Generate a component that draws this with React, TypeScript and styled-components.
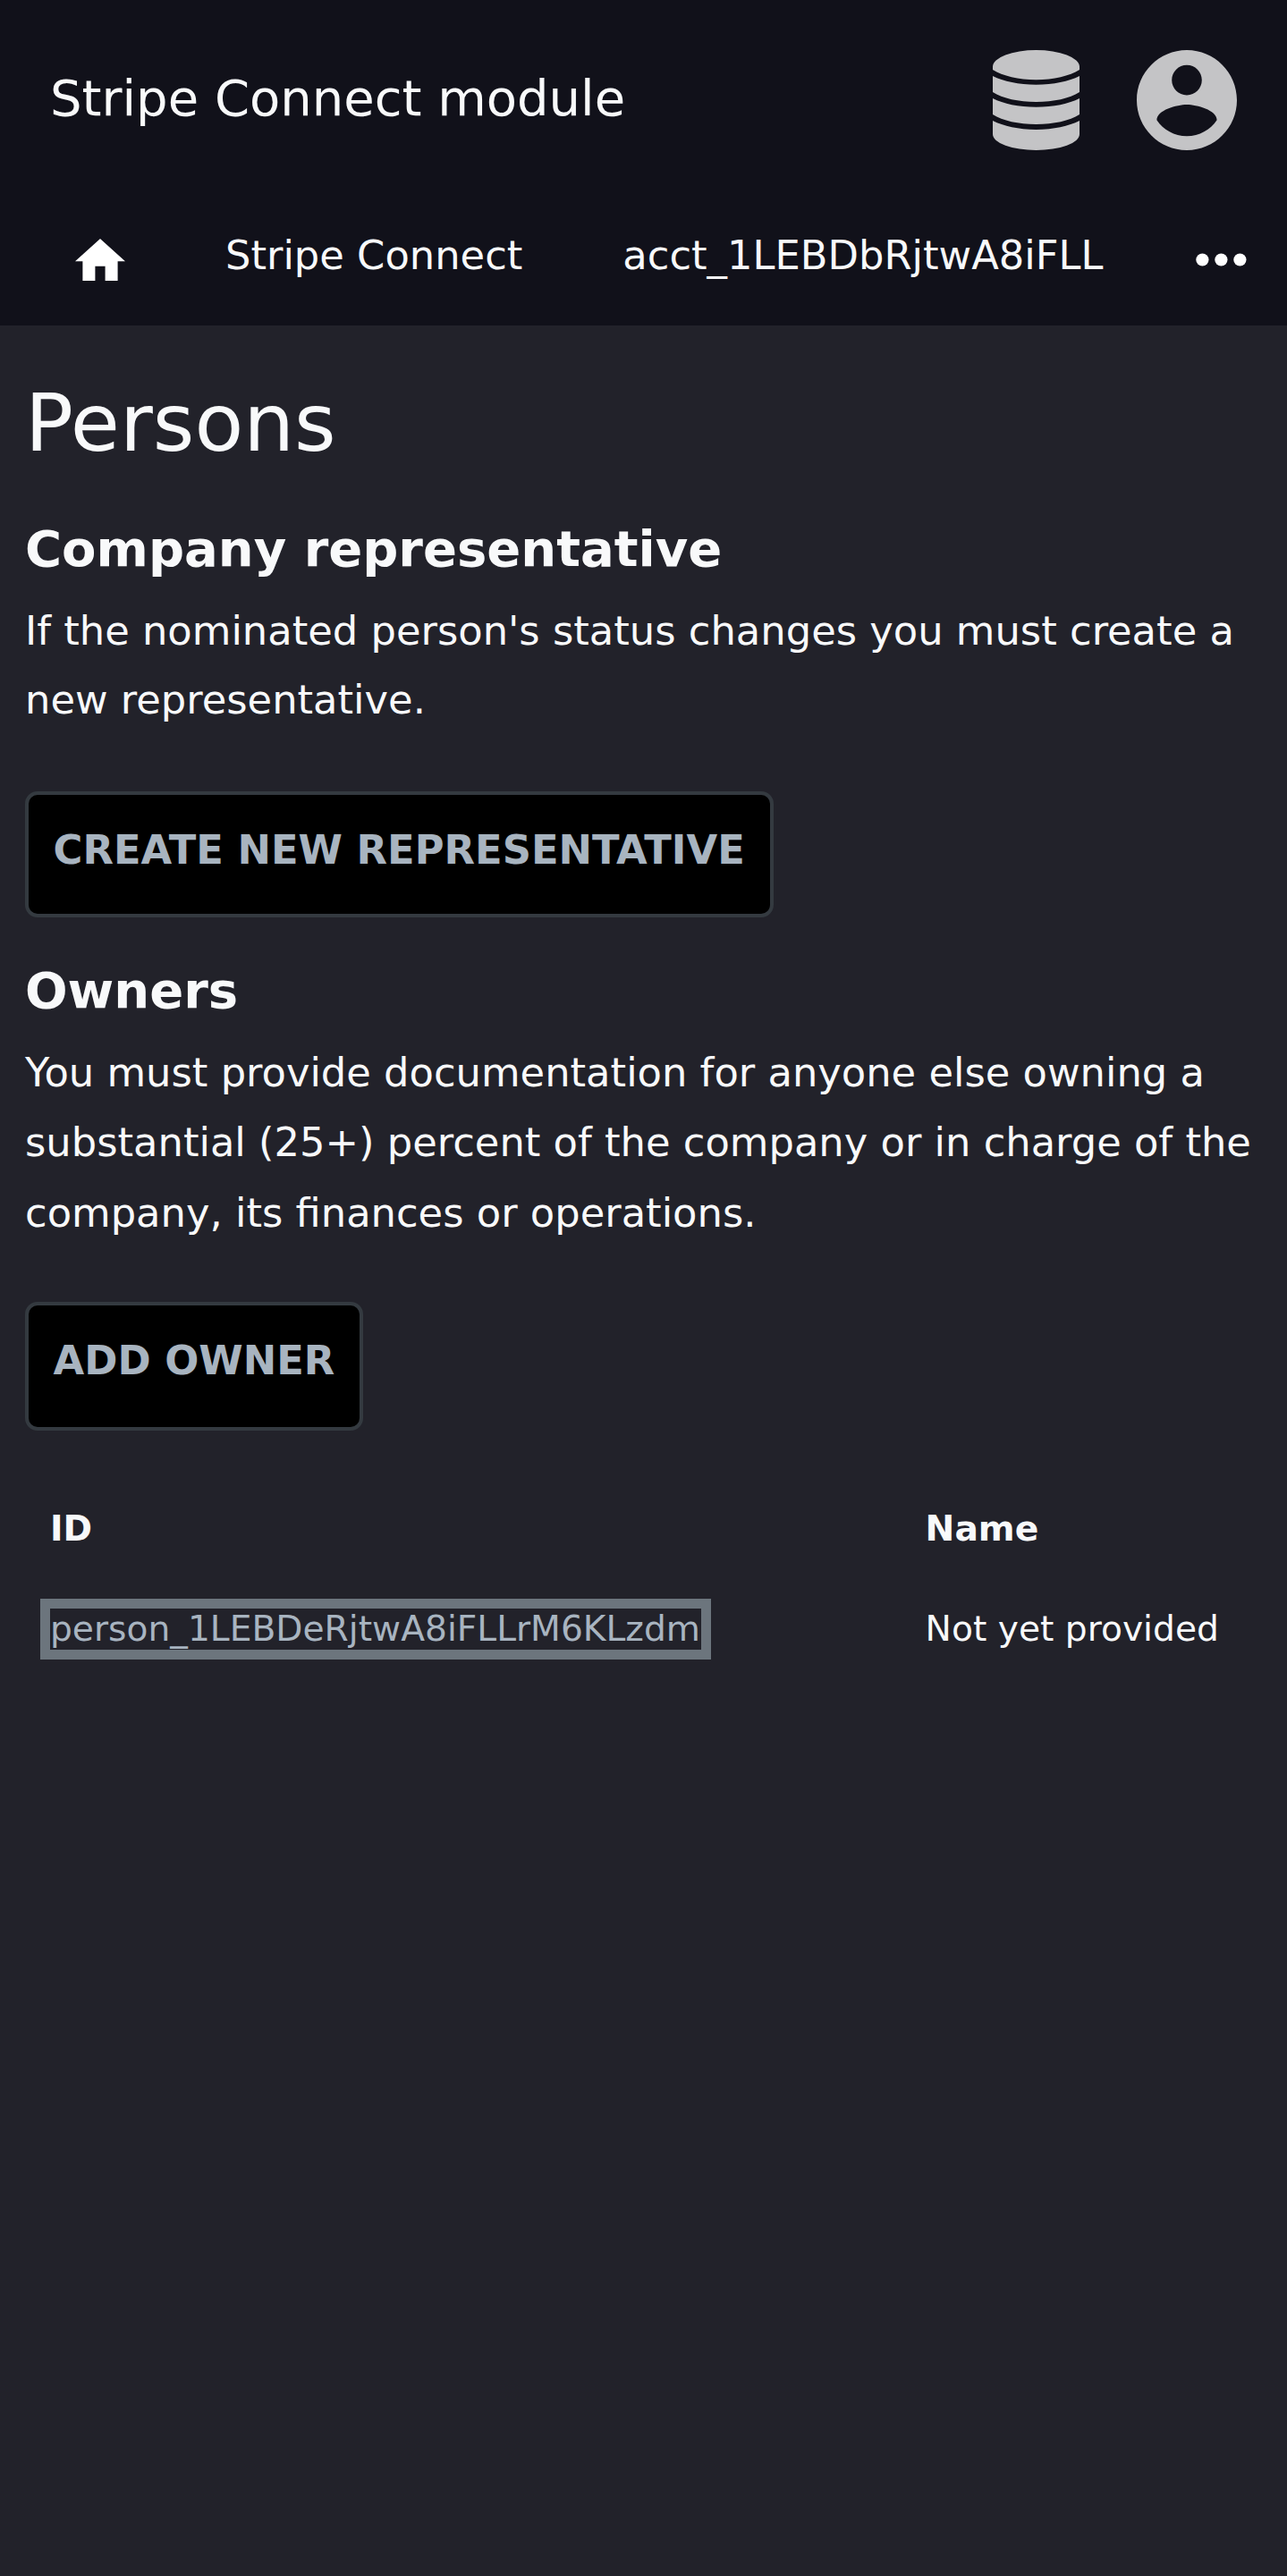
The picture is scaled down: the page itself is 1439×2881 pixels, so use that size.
import React from "react";
import styled, { createGlobalStyle } from "styled-components";

const GlobalStyle = createGlobalStyle`
  html { background: #22222a; }
  body {
    margin: 0;
    min-height: 2881px;
    background: #22222a;
    color: #f8f9fa;
    font-family: "DejaVu Sans", sans-serif;
    font-size: 44.8px;
    line-height: 78.4px;
  }
  * { box-sizing: border-box; }
`;

const Header = styled.header`
  height: 364px;
  background: #11111a;
`;

const TopBar = styled.div`
  height: 224px;
  padding: 0 56px;
  display: flex;
  align-items: center;
  justify-content: space-between;
`;

const Brand = styled.div`
  font-size: 56px;
  line-height: 78px;
  margin-top: -4px;
`;

const Actions = styled.div`
  display: flex;
  gap: 64px;
  color: #c4c4c6;
`;

const Icon = styled.svg<{ $w: number; $h: number }>`
  display: block;
  flex: none;
  width: ${(p) => p.$w}px;
  height: ${(p) => p.$h}px;
  fill: currentColor;
`;

const Nav = styled.nav`
  height: 140px;
  padding: 0 45.5px 0 84px;
  display: flex;
  align-items: flex-start;
  white-space: nowrap;
`;

const HomeLink = styled.a`
  padding-top: 42.6px;
  color: #fff;
`;

const NavItem = styled.a`
  padding-top: 23.3px;
  margin-left: 112px;
`;

const More = styled.a`
  margin-left: auto;
  padding-top: 59px;
  color: #fff;
`;

const Main = styled.main`
  padding: 56px 28px 0;
`;

const Title = styled.h1`
  margin: 0;
  font-size: 89.6px;
  font-weight: 400;
  line-height: 106px;
`;

const Subtitle = styled.h2<{ $top: number }>`
  margin: ${(p) => p.$top}px 0 0;
  font-size: 56px;
  font-weight: 700;
  line-height: 78px;
`;

const Text = styled.p<{ $line: number }>`
  margin: 14px 0 0;
  line-height: ${(p) => p.$line}px;
`;

const Button = styled.button<{ $top: number; $h: number }>`
  display: flex;
  align-items: flex-start;
  width: fit-content;
  margin: ${(p) => p.$top}px 0 0;
  height: ${(p) => p.$h}px;
  padding: 31.6px 27.8px 0 27.6px;
  background: #000;
  border: 4px solid #343a40;
  border-radius: 14px;
  color: #a8b4c0;
  font: 700 44.8px/60px "DejaVu Sans", sans-serif;
  text-transform: uppercase;
`;

const Table = styled.div`
  display: grid;
  grid-template-columns: 978.6px 1fr;
  margin: 54px 0 0 28px;
  font-size: 39.2px;
  line-height: 112px;
  white-space: nowrap;
`;

const HeadCell = styled.div`
  font-weight: 700;
`;

const PersonLink = styled.a`
  padding: 0 1px 1px 0;
  color: #a8b4c0;
  outline: 11.2px solid #6c757d;
`;

export default function App() {
  return (
    <>
      <GlobalStyle />
      <Header>
        <TopBar>
          <Brand>Stripe Connect module</Brand>
          <Actions>
            <Icon $w={97} $h={112} viewBox="0 0 97 112">
              <path d="M0 18.5A48.5 18.5 0 0 1 97 18.5V22C86 29 68 33.2 48.5 33.2S11 29 0 22z" />
              <path d="M0 29C12 35 29 38.7 48.5 38.7S85 35 97 29V47C86 54 68 58 48.5 58S11 54 0 47z" />
              <path d="M0 54C12 60 29 63.8 48.5 63.8S85 60 97 54V72C86 79 68 83 48.5 83S11 79 0 72z" />
              <path d="M0 79C12 85 29 88.9 48.5 88.9S85 85 97 79V94A48.5 18 0 0 1 0 94z" />
            </Icon>
            <Icon $w={112} $h={112} viewBox="2 2 20 20">
              <path d="M12 2C6.48 2 2 6.48 2 12s4.48 10 10 10 10-4.48 10-10S17.52 2 12 2zm0 3c1.66 0 3 1.34 3 3s-1.34 3-3 3-3-1.34-3-3 1.34-3 3-3zm0 14.2c-2.5 0-4.71-1.28-6-3.22.03-1.99 4-3.08 6-3.08 1.99 0 5.97 1.09 6 3.08-1.29 1.94-3.5 3.22-6 3.22z" />
            </Icon>
          </Actions>
        </TopBar>
        <Nav>
          <HomeLink>
            <Icon $w={56} $h={47.6} viewBox="2 3 20 17">
              <path d="M10 20v-6h4v6h5v-8h3L12 3 2 12h3v8z" />
            </Icon>
          </HomeLink>
          <NavItem>Stripe Connect</NavItem>
          <NavItem>acct_1LEBDbRjtwA8iFLL</NavItem>
          <More>
            <Icon $w={57} $h={15} viewBox="0 0 57 15">
              <circle cx="7.4" cy="7.5" r="7.1" />
              <circle cx="28.4" cy="7.5" r="7.1" />
              <circle cx="49.4" cy="7.5" r="7.1" />
            </Icon>
          </More>
        </Nav>
      </Header>
      <Main>
        <Title>Persons</Title>
        <Subtitle $top={49}>Company representative</Subtitle>
        <Text $line={77}>
          If the nominated person's status changes you must create a new representative.
        </Text>
        <Button $top={64} $h={140.5}>Create new representative</Button>
        <Subtitle $top={43}>Owners</Subtitle>
        <Text $line={78.5}>
          You must provide documentation for anyone else owning a substantial (25+) percent of the
          company or in charge of the company, its finances or operations.
        </Text>
        <Button $top={60} $h={143.5}>Add owner</Button>
        <Table>
          <HeadCell>ID</HeadCell>
          <HeadCell>Name</HeadCell>
          <div>
            <PersonLink>person_1LEBDeRjtwA8iFLLrM6KLzdm</PersonLink>
          </div>
          <div>Not yet provided</div>
        </Table>
      </Main>
    </>
  );
}
